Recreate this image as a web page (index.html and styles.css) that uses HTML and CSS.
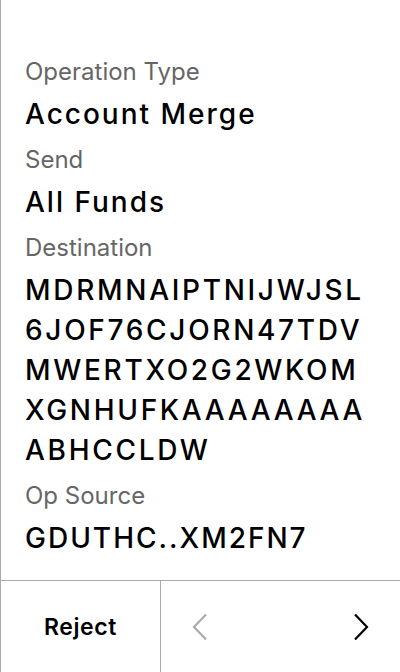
FILE: index.html
```html
<!DOCTYPE html>
<html>
<head>
<meta charset="utf-8">
<link rel="stylesheet" href="styles.css">
</head>
<body>
<div class="screen">
  <div class="content">
    <div class="field">
      <div class="label">Operation Type</div>
      <div class="value">Account Merge</div>
    </div>
    <div class="field">
      <div class="label">Send</div>
      <div class="value">All Funds</div>
    </div>
    <div class="field">
      <div class="label">Destination</div>
      <div class="value address">
        <span class="line">MDRMNAIPTNIJWJSL</span>
        <span class="line">6JOF76CJORN47TDV</span>
        <span class="line">MWERTXO2G2WKOM</span>
        <span class="line">XGNHUFKAAAAAAAA</span>
        <span class="line">ABHCCLDW</span>
      </div>
    </div>
    <div class="field">
      <div class="label">Op Source</div>
      <div class="value">GDUTHC..XM2FN7</div>
    </div>
  </div>
  <div class="footer">
    <div class="reject">Reject</div>
    <div class="nav">
      <svg class="chev prev" width="16" height="26" viewBox="0 0 16 26"><path d="M14 0.5 L2 13 L14 25.5" fill="none" stroke="currentColor" stroke-width="2.2"/></svg>
      <svg class="chev next" width="16" height="26" viewBox="0 0 16 26"><path d="M2 0.5 L14 13 L2 25.5" fill="none" stroke="currentColor" stroke-width="2.2"/></svg>
    </div>
  </div>
</div>
</body>
</html>
```

FILE: styles.css
```css
html, body {
  margin: 0;
  padding: 0;
  background: #fff;
}
body {
  font-family: Inter, "Noto Sans", sans-serif;
  color: #000;
}
.screen {
  width: 399px;
  height: 672px;
  border-left: 1px solid #aaa;
  display: flex;
  flex-direction: column;
}
.content {
  flex: 1;
  padding: 56px 6px 0 24px;
}
.field {
  display: flex;
  flex-direction: column;
}
.label {
  font-size: 24px;
  line-height: 32px;
  color: #666;
}
.value {
  font-size: 28px;
  font-weight: 500;
  line-height: 40px;
  letter-spacing: 2px;
  margin-top: 6px;
  margin-bottom: 10px;
}
.address {
  display: flex;
  flex-direction: column;
  letter-spacing: 2.7px;
}
.line {
  display: block;
}
.footer {
  height: 91px;
  border-top: 1px solid #aaa;
  display: flex;
}
.reject {
  width: 159px;
  border-right: 1px solid #aaa;
  display: flex;
  align-items: center;
  justify-content: center;
  font-size: 23px;
  font-weight: 600;
  letter-spacing: 0.6px;
}
.nav {
  flex: 1;
  display: flex;
  align-items: center;
  justify-content: space-between;
  padding: 0 31px 0 31px;
}
.chev.prev { color: #aaa; }
.chev.next { color: #000; }
```
